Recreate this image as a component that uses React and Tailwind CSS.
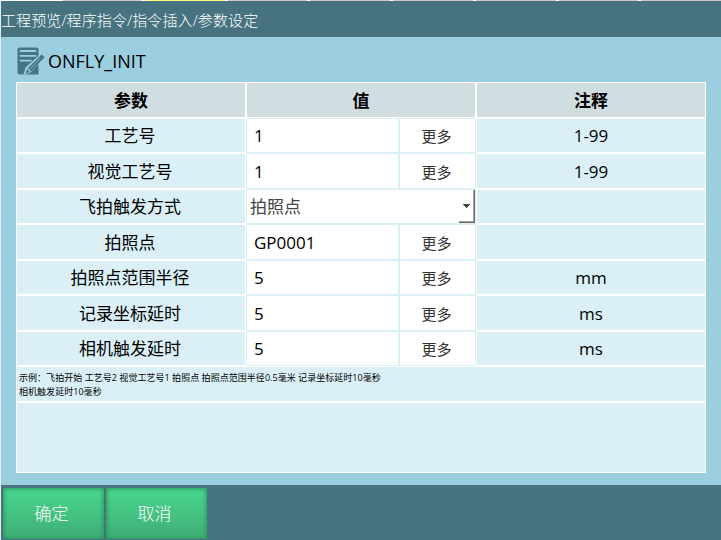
const rows = [
  { h: 'h-[33px]', name: '工艺号', value: '1', note: '1-99' },
  { h: 'h-[34px]', name: '视觉工艺号', value: '1', note: '1-99' },
  { h: 'h-[33px]', name: '飞拍触发方式', select: '拍照点', note: '' },
  { h: 'h-[34px]', name: '拍照点', value: 'GP0001', note: '' },
  { h: 'h-[33px]', name: '拍照点范围半径', value: '5', note: 'mm' },
  { h: 'h-[34px]', name: '记录坐标延时', value: '5', note: 'ms' },
  { h: 'h-[33px]', name: '相机触发延时', value: '5', note: 'ms' },
];

function EditIcon() {
  return (
    <svg width="29" height="28" viewBox="0 0 29 28" className="shrink-0">
      <path d="M3.5 0.5H20.5Q22.5 0.5 22.5 2.5V27.5H3.5Q1.5 27.5 1.5 25.5V2.5Q1.5 0.5 3.5 0.5Z" fill="#447585" />
      <path d="M4.5 4H19.5M4.5 8.8H19.5M4.5 13.6H15" stroke="#9bcfe0" strokeWidth="1.8" strokeLinecap="round" />
      <path d="M25 6.5L29 10L14.5 25.5L7.5 28L9.5 20.5Z" fill="#9bcfe0" />
      <path d="M25.6 7.5L28.6 10.2L15 24.2L11.8 21.2Z" fill="#447585" />
      <path d="M11 22.2L13.8 24.8L9.6 26.4Z" fill="#447585" />
      <path d="M13.6 22.4L24.4 11" stroke="#9bcfe0" strokeWidth="0.7" />
    </svg>
  );
}

function HeadCell({ children }) {
  return <div className="flex h-[34px] items-center justify-center bg-[#d0dde1] text-[17px] font-bold">{children}</div>;
}

function Row({ row }) {
  return (
    <>
      <div className={`flex items-center justify-center bg-[#daf0f6] pr-[2px] ${row.h}`}>{row.name}</div>
      <div className="-m-px flex gap-[2px] bg-[#daf0f6] p-px">
        {row.select ? (
          <div className="flex flex-1 items-center justify-between bg-white pl-[3px] text-[#444]">
            <span>{row.select}</span>
            <span className="flex h-full w-4 items-center justify-center border-r border-b border-[#696969]">
              <span className="flex h-full w-full items-center justify-center border-r border-b border-[#a0a0a0]">
                <svg width="7" height="4" viewBox="0 0 7 4" shapeRendering="crispEdges">
                  <path d="M0 0H7V1H6V2H5V3H4V4H3V3H2V2H1V1H0Z" fill="#404040" />
                </svg>
              </span>
            </span>
          </div>
        ) : (
          <>
            <div className="flex w-[151px] items-center bg-white pl-[7px]">{row.value}</div>
            <div className="flex flex-1 items-center justify-center bg-white pr-[2px] pt-[2px] text-[15px] text-[#333]">
              更多
            </div>
          </>
        )}
      </div>
      <div className="flex items-center justify-center bg-[#daf0f6]">{row.note}</div>
    </>
  );
}

function ActionButton({ children }) {
  return (
    <button className="flex h-[51px] w-[101px] items-center justify-center bg-linear-to-b from-[#49d88f] to-[#3fae75] pr-[4px] text-[17px] text-white shadow-[inset_0_0_4px_1px_#27985c]">
      {children}
    </button>
  );
}

export default function App() {
  return (
    <div className="flex h-[540px] w-[721px] flex-col overflow-hidden border-l border-[#e4eef2] bg-[#9bcfe0] font-['Open_Sans','Noto_Sans_CJK_SC',sans-serif] text-[17px] leading-none font-light text-black">
      <div className="flex h-px shrink-0 bg-white">
        <div className="w-[62px]" />
        <div className="w-[78px] bg-[#c8c8c8]" />
        <div className="ml-[5px] w-[79px] bg-[#ffff80]" />
        <div className="ml-[3px] w-[79px] bg-[#c8c8c8]" />
        <div className="ml-[3px] w-[80px] bg-[#c8c8c8]" />
        <div className="ml-[3px] w-[80px] bg-[#c8c8c8]" />
        <div className="ml-[3px] w-[80px] bg-[#c8c8c8]" />
        <div className="ml-[3px] w-[79px] bg-[#c8c8c8]" />
        <div className="ml-[3px] flex-1 bg-[#c8c8c8]" />
      </div>
      <header className="flex h-9 shrink-0 items-center bg-[#477381] pt-[2px] text-[15px] tracking-[0.1px] text-white">
        工程预览/程序指令/指令插入/参数设定
      </header>
      <div className="flex h-[45px] shrink-0 items-center pl-[15px] pt-[3px]">
        <EditIcon />
        <h1 className="ml-[3px] text-[18px] font-normal">ONFLY_INIT</h1>
      </div>
      <main className="ml-[15px] flex h-[391px] w-[690px] shrink-0 flex-col gap-[2px] bg-white p-px">
        <div className="grid grid-cols-3 gap-[2px] font-normal">
          <HeadCell>参数</HeadCell>
          <HeadCell>值</HeadCell>
          <HeadCell>注释</HeadCell>
          {rows.map((row) => (
            <Row key={row.name} row={row} />
          ))}
        </div>
        <div className="h-[34px] bg-[#daf0f6] pl-[2px] pt-[4px] text-[9px] leading-[14px] font-normal tracking-[0.04px]">
          示例：飞拍开始 工艺号2 视觉工艺号1 拍照点 拍照点范围半径0.5毫米 记录坐标延时10毫秒
          <br />
          相机触发延时10毫秒
        </div>
        <div className="flex-1 bg-[#daf0f6]" />
      </main>
      <footer className="mt-3 flex flex-1 gap-[2px] bg-[#477381] pl-[2px] pt-[3px]">
        <ActionButton>确定</ActionButton>
        <ActionButton>取消</ActionButton>
      </footer>
    </div>
  );
}
